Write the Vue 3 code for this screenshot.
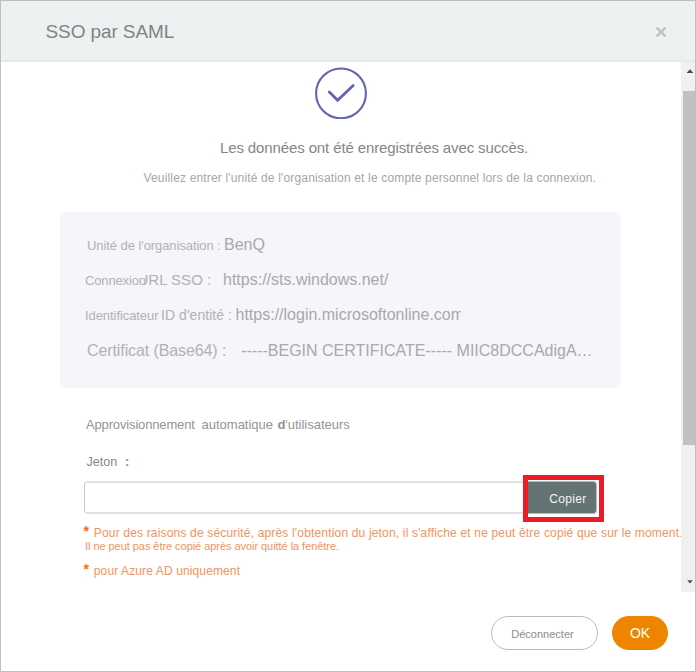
<script setup>
const notes = [
  "Pour des raisons de sécurité, après l'obtention du jeton, il s'affiche et ne peut être copié que sur le moment.",
  'pour Azure AD uniquement',
]
</script>

<template>
  <div class="modal">
    <header class="header">
      <h1 class="title">SSO par SAML</h1>
      <button class="close" aria-label="Fermer">
        <svg width="12" height="12" viewBox="0 0 12 12"><path d="M1.6 1.6 10.4 10.4M10.4 1.6 1.6 10.4" /></svg>
      </button>
    </header>

    <div class="body">
      <main class="content">
        <svg class="check" width="52" height="52" viewBox="0 0 52 52">
          <circle cx="26" cy="26.4" r="24.9" />
          <path d="M14.3 25 22.6 33.2 38.2 18.6" />
        </svg>
        <p class="success">Les données ont été enregistrées avec succès.</p>
        <p class="sub">Veuillez entrer l'unité de l'organisation et le compte personnel lors de la connexion.</p>

        <section class="panel">
          <div class="row org"><span class="label">Unité de l'organisation :</span><span class="value">BenQ</span></div>
          <div class="row login"><span class="label">Connexion</span><span class="extra">URL SSO :</span><span class="value">https://sts.windows.net/</span></div>
          <div class="row entity"><span class="label">Identificateur</span><span class="extra">ID d'entité :</span><span class="value">https://login.microsoftonline.com</span></div>
          <div class="row cert"><span class="label">Certificat (Base64) :</span><span class="value">-----BEGIN CERTIFICATE----- MIIC8DCCAdigA…</span></div>
        </section>

        <p class="provision"><span class="first">Approvisionnement</span><span class="second">automatique</span><span><b>d</b>'utilisateurs</span></p>
        <p class="token">Jeton<b>:</b></p>

        <div class="field">
          <div class="input"></div>
          <div class="highlight"><button class="copy">Copier</button></div>
        </div>

        <div class="notes">
          <p class="note"><b>*</b><span>{{ notes[0] }}</span></p>
          <p class="small">Il ne peut pas être copié après avoir quitté la fenêtre.</p>
          <p class="note last"><b>*</b><span>{{ notes[1] }}</span></p>
        </div>
      </main>
      <aside class="scrollbar">
        <svg width="8" height="4" viewBox="0 0 8 4"><path d="M.5 4 4 .3 7.5 4Z" /></svg>
        <div class="thumb"></div>
        <svg class="down" width="6" height="4" viewBox="0 0 6 4"><path d="M.2.3H5.8L3 3.4Z" /></svg>
      </aside>
    </div>

    <footer class="footer">
      <button class="disconnect">Déconnecter</button>
      <button class="ok">OK</button>
    </footer>
  </div>
</template>

<style>
body {
  margin: 0;
}
</style>

<style scoped>
* {
  box-sizing: border-box;
}
p,
h1 {
  margin: 0;
  font-weight: 400;
}
button {
  margin: 0;
  padding: 0;
  border: 0;
  background: none;
  font-family: inherit;
}
svg {
  display: block;
}
.modal {
  width: 696px;
  height: 672px;
  display: flex;
  flex-direction: column;
  overflow: hidden;
  border: 1px solid #bfbfbf;
  background: #fff;
  font-family: "Liberation Sans", Arial, sans-serif;
  white-space: nowrap;
}
.header {
  flex: none;
  height: 61px;
  display: flex;
  justify-content: space-between;
  align-items: center;
  padding: 3px 28px 0 44.5px;
  background: #edf1f2;
  border-bottom: 2px solid #e8eaea;
}
.title {
  font-size: 19px;
  line-height: 24px;
  letter-spacing: -0.1px;
  color: #838383;
}
.close path {
  fill: none;
  stroke: #bcbebf;
  stroke-width: 2.2;
}
.body {
  flex: none;
  height: 530px;
  display: flex;
}
.content {
  width: 680px;
  display: flex;
  flex-direction: column;
  align-items: flex-start;
  padding-top: 5px;
}
.check {
  align-self: center;
}
.check circle,
.check path {
  fill: none;
  stroke: #6264b4;
  stroke-width: 2.1;
}
.check path {
  stroke-width: 2.8;
  stroke-linecap: round;
}
.success {
  margin: 18.5px 0 0 219px;
  font-size: 15px;
  line-height: 20px;
  letter-spacing: -0.12px;
  color: #868686;
}
.sub {
  margin: 12px 0 0 142.5px;
  font-size: 12px;
  line-height: 16px;
  letter-spacing: 0.16px;
  color: #a6a6a6;
}
.panel {
  width: 561px;
  height: 176px;
  margin: 26px 0 0 59px;
  padding: 16.5px 0 0 25px;
  border-radius: 8px;
  background: #f5f5fa;
}
.row {
  height: 35px;
  display: flex;
  align-items: baseline;
  line-height: 34px;
  color: #b2b2b2;
}
.label {
  font-size: 13px;
  letter-spacing: -0.07px;
}
.value {
  font-size: 16px;
  color: #a9a9a9;
}
.org .label {
  width: 139px;
  padding-left: 2px;
}
.login .label {
  width: 52.5px;
  letter-spacing: -0.15px;
}
.login .extra {
  width: 85.5px;
  font-size: 15px;
  clip-path: inset(0 0 0 4px);
}
.entity .label {
  width: 76px;
}
.entity .extra {
  width: 74.5px;
  font-size: 14px;
  letter-spacing: 0.05px;
}
.entity .value {
  width: 225.5px;
  overflow: hidden;
  height: 34px;
}
.cert {
  padding-top: 1px;
}
.cert .label {
  width: 156.2px;
  padding-left: 2px;
  font-size: 16px;
  letter-spacing: -0.1px;
}
.provision {
  display: flex;
  margin: 29px 0 0 85px;
  font-size: 13px;
  line-height: 16px;
  color: #949494;
}
.provision .first {
  width: 115.5px;
  letter-spacing: -0.15px;
}
.provision .second {
  width: 76px;
}
.provision b {
  display: inline-block;
  width: 7.7px;
}
.token {
  display: flex;
  gap: 8px;
  margin: 21px 0 0 85.5px;
  font-size: 12.5px;
  line-height: 16px;
  color: #878787;
}
.token b {
  font-size: 13px;
}
.field {
  display: flex;
  height: 47px;
  margin: 5px 0 0 83px;
}
.input {
  width: 439px;
  height: 33px;
  margin-top: 6px;
  border: 2px solid #e0e0e0;
  border-right: 0;
  border-left: 1px solid #c7c7c7;
  border-radius: 4px 0 0 4px;
}
.highlight {
  width: 81px;
  height: 47px;
  padding-top: 1px;
  border: 5px solid #ed1c24;
}
.copy {
  display: block;
  width: 69px;
  height: 33px;
  padding: 3px 0 0 12px;
  border: 1px solid #b4bbbb;
  border-left: 0;
  border-radius: 0 4px 4px 0;
  background: #647374;
  color: #f3f3f3;
  font-size: 12px;
  letter-spacing: 0.35px;
}
.notes {
  display: flex;
  flex-direction: column;
  margin: 3px 0 0 82.5px;
  color: #ef945f;
}
.note {
  display: flex;
  font-size: 12px;
  line-height: 16px;
  letter-spacing: 0.17px;
}
.note b {
  width: 10.3px;
  height: 14px;
  line-height: 12px;
  font-size: 14px;
  color: #ef6c25;
}
.small {
  margin-left: 1.5px;
  font-size: 11px;
  line-height: 11px;
  letter-spacing: -0.05px;
}
.last {
  margin-top: 11px;
  letter-spacing: 0.12px;
}
.scrollbar {
  width: 14px;
  display: flex;
  flex-direction: column;
  padding: 7px 0 8px 2px;
  background: #f0f0f0;
}
.scrollbar svg {
  margin-left: 2.5px;
  fill: #4d4d4d;
}
.thumb {
  height: 354px;
  margin-top: 18px;
  background: #c1c1c1;
}
.scrollbar .down {
  margin: auto 0 0 4px;
}
.footer {
  display: flex;
  justify-content: flex-end;
  gap: 14px;
  padding: 24px 27px 0 0;
}
.disconnect {
  width: 107px;
  height: 34px;
  padding-top: 2px;
  padding-right: 4px;
  border: 1.5px solid #bdbdbd;
  border-radius: 17px;
  font-size: 11px;
  color: #8c8c91;
}
.ok {
  width: 56px;
  height: 34px;
  border-radius: 17px;
  background: #ee8500;
  color: #fff;
  font-size: 14px;
}
</style>
